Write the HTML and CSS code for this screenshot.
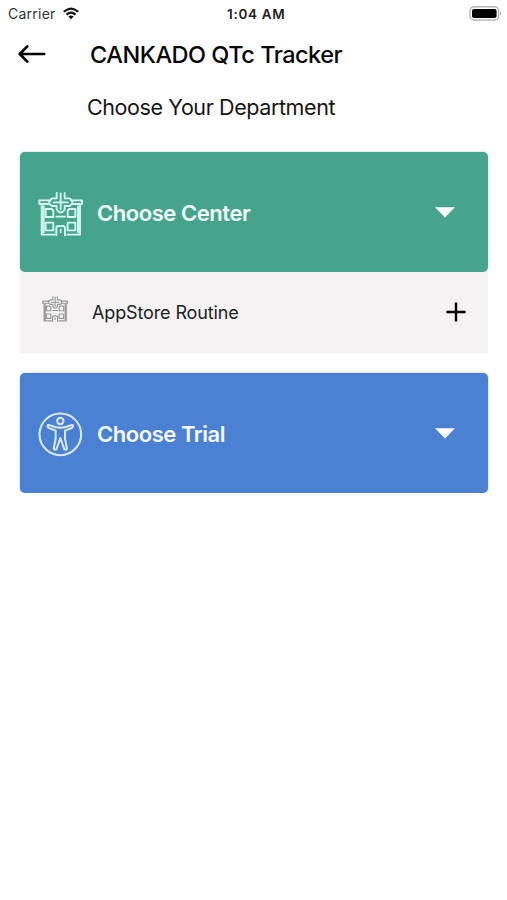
FILE: index.html
```html
<!DOCTYPE html>
<html lang="en">
<head>
<meta charset="utf-8">
<title>CANKADO QTc Tracker</title>
<link rel="stylesheet" href="styles.css">
</head>
<body>
<svg class="defs" aria-hidden="true">
  <symbol id="building" viewBox="24 33 135 132">
    <g fill="none" stroke="currentColor" stroke-linejoin="round" stroke-linecap="round">
      <path d="M61 58H28V69H58M123 58H156V69H126M35 70V161H73M150 70V161H112M41 76V154M144 76V154"/>
      <path d="M80 36V52H66L58 60V68L66 75H80V86L88 94H96L104 86V75H119L127 68V60L119 52H104V36"/>
      <path d="M92 37V85M71 64H113"/>
      <path d="M47 84H65L70 89V108H47ZM136 84H118L113 89V108H136ZM47 125H70V148H47ZM113 125H136V148H113ZM79 107H105"/>
      <path d="M79 163V142Q79 135 86 135H98Q105 135 105 142V163M92 146V154"/>
    </g>
  </symbol>
</svg>
<header class="status">
  <span class="carrier">Carrier</span>
  <svg class="wifi" viewBox="0 0 18 13"><path d="M1.8 4.8Q9-1.6 16.2 4.8M4.5 7.6Q9 3.7 13.5 7.6" fill="none" stroke="#111" stroke-width="2.2"/><path d="M6.3 9.5Q9 7.3 11.7 9.5L9 12.3Z" fill="#111"/></svg>
  <span class="clock">1:04 AM</span>
  <svg class="battery" viewBox="0 0 33 15"><rect x="1" y=".8" width="28.6" height="13.2" rx="4" fill="#fff" stroke="#b5b5b5" stroke-width="1.400"/><rect x="3" y="2.900" width="24.600" height="9" rx="2" fill="#000"/><path d="M31 5.200Q33 7.400 31 9.600Z" fill="#999"/></svg>
</header>
<nav class="bar">
  <svg class="back" viewBox="0 0 28 20"><path d="M26.2 10H2M9.3 2.4L1.8 10L9.3 17.6" fill="none" stroke="#000" stroke-width="2.7" stroke-linecap="round" stroke-linejoin="round"/></svg>
  <h1 class="title">CANKADO QTc Tracker</h1>
</nav>
<h2 class="subtitle">Choose Your Department</h2>
<main class="list">
  <section class="card center">
    <svg class="icon building"><use href="#building"/></svg>
    <span class="label label-center">Choose Center</span>
    <svg class="caret" viewBox="0 0 20 11"><path d="M0 .3H20L10 10.6Z" fill="#fff"/></svg>
  </section>
  <div class="row">
    <svg class="small-icon"><use href="#building"/></svg>
    <span class="row-label">AppStore Routine</span>
    <svg class="plus" viewBox="0 0 20 20"><path d="M10 .4V19.6M.4 10H19.6" stroke="#000" stroke-width="2.4"/></svg>
  </div>
  <section class="card trial">
    <svg class="icon person" viewBox="24 21 135 135">
      <g fill="none" stroke="currentColor" stroke-width="6" stroke-linejoin="round" stroke-linecap="round">
        <circle cx="91" cy="88" r="62.500"/>
        <circle cx="91" cy="48" r="9.500"/>
        <path d="M54 60Q51 66 57 69L77 77V101L71 131Q73 136 79 133L91 99L103 133Q109 136 111 131L105 101V77L125 69Q131 66 128 60Q125 59 107 66Q91 70 75 66Q57 59 54 60Z"/>
      </g>
    </svg>
    <span class="label label-trial">Choose Trial</span>
    <svg class="caret" viewBox="0 0 20 11"><path d="M0 .3H20L10 10.6Z" fill="#fff"/></svg>
  </section>
</main>
</body>
</html>
```
FILE: styles.css
```css
* { box-sizing: border-box; }
body { margin: 0; background: #fff; color: #080808; font-family: Inter, "Liberation Sans", sans-serif; white-space: nowrap; }
svg { display: block; flex: none; }
.defs { position: absolute; width: 0; height: 0; }
.status { display: flex; align-items: center; height: 28px; padding-left: 8px; line-height: 20px; }
.carrier { width: 54px; font-size: 14px; letter-spacing: .25px; color: #333; }
.wifi { width: 18px; height: 13px; margin-top: -2px; }
.clock { width: 242px; margin-left: 147px; font-size: 13.500px; font-weight: 600; letter-spacing: .7px; color: #222; }
.battery { width: 33px; height: 15px; margin-top: -1px; }
.bar { display: flex; align-items: center; height: 52px; padding-left: 18px; }
.back { width: 28px; height: 20px; margin-top: -1px; }
.title { margin: 1px 0 0 44px; font-size: 23.500px; font-weight: 500; line-height: 32px; letter-spacing: -.48px; }
.subtitle { margin: 12px 0 0 87px; font-size: 21.500px; font-weight: 400; line-height: 30px; letter-spacing: -.4px; color: #151515; }
.list { padding: 30px 19px 0 20px; }
.card { display: flex; align-items: center; height: 120px; padding: 0 33px 0 18px; border-radius: 5px; color: #fff; }
.center { background: #47a48c; box-shadow: 0 0 2px #8cc8b9; }
.trial { margin-top: 20px; background: #4b81d3; box-shadow: 0 0 2px #86aee9; }
.icon { width: 45px; height: 44px; }
.building { margin-top: 3px; color: #d8fff4; stroke-width: 5.500; }
.person { height: 45px; margin-top: 3px; color: #dceaff; }
.label { margin: 2px 0 0 14px; font-size: 22px; font-weight: 600; line-height: 30px; letter-spacing: -.45px; }
.label-center { color: #effffa; }
.label-trial { color: #f4f8ff; }
.caret { width: 20px; height: 11px; margin-left: auto; margin-top: 1px; }
.row { display: flex; align-items: center; height: 81px; padding: 0 22px; background: #f4f2f3; }
.small-icon { width: 26px; height: 26px; margin-top: -8px; color: #999; stroke-width: 6; }
.row-label { margin-left: 24px; font-size: 18px; line-height: 26px; letter-spacing: -.13px; color: #222; }
.plus { width: 20px; height: 20px; margin: -1px 0 0 auto; }
```
